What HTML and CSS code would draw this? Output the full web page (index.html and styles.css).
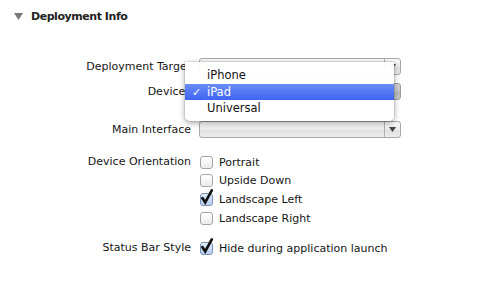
FILE: index.html
```html
<!DOCTYPE html>
<html>
<head>
<meta charset="utf-8">
<link rel="stylesheet" href="styles.css">
</head>
<body>
<div class="page">
  <div class="header">
    <svg class="disclosure" width="9" height="7" viewBox="0 0 9 7"><path d="M0 0 H9 L4.5 7 Z" fill="#7a7a7a"/></svg>
    <span class="title">Deployment Info</span>
  </div>

  <div class="form">
    <div class="row popup-row first">
      <div class="label">Deployment Target</div>
      <div class="popup"><span class="popup-text"></span><span class="arrow"><svg width="7" height="5" viewBox="0 0 7 5"><path d="M0 0 H7 L3.5 5Z" fill="#444"/></svg></span></div>
    </div>
    <div class="row popup-row second">
      <div class="label">Devices</div>
      <div class="popup pressed"><span class="popup-text"></span></div>
    </div>
    <div class="row popup-row third">
      <div class="label">Main Interface</div>
      <div class="popup"><span class="popup-text"></span><span class="arrow"><svg width="7" height="5" viewBox="0 0 7 5"><path d="M0 0 H7 L3.5 5Z" fill="#444"/></svg></span></div>
    </div>

    <div class="row group orient">
      <div class="label">Device Orientation</div>
      <div class="checks">
        <label class="check"><span class="box"></span><span>Portrait</span></label>
        <label class="check"><span class="box"></span><span>Upside Down</span></label>
        <label class="check"><span class="box on"><svg class="tick" width="14" height="16" viewBox="0 0 14 16"><path d="M2.4 9 L5.2 13.4 L11.8 1.4" fill="none" stroke="#111" stroke-width="2.6" stroke-linejoin="miter" stroke-linecap="round"/></svg></span><span>Landscape Left</span></label>
        <label class="check"><span class="box"></span><span>Landscape Right</span></label>
      </div>
    </div>

    <div class="row group status">
      <div class="label">Status Bar Style</div>
      <div class="checks">
        <label class="check"><span class="box on"><svg class="tick" width="14" height="16" viewBox="0 0 14 16"><path d="M2.4 9 L5.2 13.4 L11.8 1.4" fill="none" stroke="#111" stroke-width="2.6" stroke-linejoin="miter" stroke-linecap="round"/></svg></span><span class="wide">Hide during application launch</span></label>
      </div>
    </div>

    <div class="menu">
      <div class="item">iPhone</div>
      <div class="item selected"><span class="mark">✓</span>iPad</div>
      <div class="item">Universal</div>
    </div>
  </div>
</div>
</body>
</html>
```

FILE: styles.css
```css
html, body {
  margin: 0;
  padding: 0;
  background: #ffffff;
}
body {
  font-family: "DejaVu Sans", "Liberation Sans", sans-serif;
  font-size: 11px;
  color: #151515;
}
.page {
  width: 480px;
  height: 289px;
  overflow: hidden;
}
.header {
  display: flex;
  align-items: center;
  height: 16px;
  margin-top: 8px;
  padding-left: 14px;
}
.disclosure {
  margin-right: 8px;
  margin-top: 1px;
}
.title {
  font-weight: bold;
  font-size: 11px;
  letter-spacing: -0.45px;
  color: #222;
}
.form {
  position: relative;
  margin-top: 34px;
}
.row {
  display: flex;
  align-items: center;
}
.label {
  width: 191px;
  text-align: right;
  white-space: nowrap;
  flex: none;
  margin-right: 8px;
}
.popup-row {
  height: 17px;
}
.second { margin-top: 8px; }
.third { margin-top: 21px; }
.popup {
  width: 200px;
  height: 15px;
  border: 1px solid #a8a8a8;
  border-radius: 3px;
  background: linear-gradient(#fbfbfb, #ececec 50%, #e0e0e0 51%, #ededed);
  display: flex;
  align-items: center;
  box-sizing: content-box;
}
.popup.pressed {
  background: linear-gradient(#d6d6d6, #c6c6c6 50%, #b8b8b8 51%, #c8c8c8);
  border-color: #9c9c9c;
}
.popup-text {
  flex: 1;
  padding-left: 8px;
  color: #555;
}
.arrow {
  width: 15px;
  height: 15px;
  border-left: 1px solid #b0b0b0;
  display: flex;
  align-items: center;
  justify-content: center;
}
.group {
  align-items: flex-start;
}
.group .label {
  line-height: 18.6px;
}
.orient { margin-top: 15px; }
.status { margin-top: 12px; }
.checks {
  display: flex;
  flex-direction: column;
}
.check {
  display: flex;
  align-items: center;
  height: 18.6px;
  white-space: nowrap;
}
.box {
  position: relative;
  width: 11px;
  height: 11px;
  border: 1px solid #a6a6a6;
  border-radius: 3px;
  background: linear-gradient(#ffffff, #ececec);
  margin-left: 1px;
  margin-right: 6px;
  flex: none;
}
.box.on {
  background: linear-gradient(#e2ecfa, #b5cdee);
  border-color: #7d93b5;
}
.tick {
  position: absolute;
  left: -1px;
  top: -5px;
}
.menu {
  position: absolute;
  left: 185px;
  top: 4px;
  width: 209px;
  padding: 5px 0 4px;
  background: rgba(255, 255, 255, 0.97);
  border-radius: 0 0 5px 5px;
  box-shadow: 0 2px 6px rgba(0, 0, 0, 0.35), 0 0 0 1px rgba(0, 0, 0, 0.08);
}
.item {
  position: relative;
  height: 16.5px;
  line-height: 17px;
  padding-left: 22px;
  font-size: 11.5px;
  color: #111;
}
.item.selected {
  background: linear-gradient(#6a8cf7, #3f64f2);
  color: #fff;
}
.mark {
  position: absolute;
  left: 7px;
  top: 0;
  font-size: 11px;
}
```
